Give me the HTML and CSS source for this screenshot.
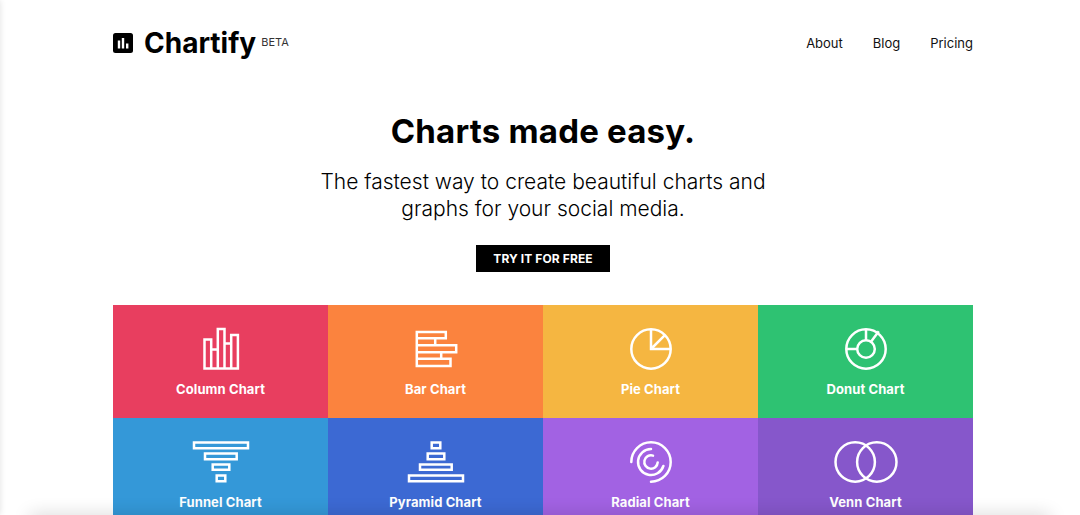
FILE: index.html
```html
<html lang="en">
<head>
    <meta charset="UTF-8">
    <meta name="viewport" content="width=device-width, initial-scale=1.0">
    <title>Chartify</title>
    <link rel="stylesheet" href="styles.css">
</head>
<body>
    <div class="page">
        <div class="header">
            <div class="brand">
                <svg class="logo" width="20" height="20" viewBox="0 0 20 20">
                    <rect width="20" height="20" rx="2.5" fill="#000"/>
                    <rect x="4.8" y="7.5" width="2.4" height="8" fill="#fff"/>
                    <rect x="8.800" y="5" width="2.4" height="10.5" fill="#fff"/>
                    <rect x="13" y="10.5" width="2.4" height="5" fill="#fff"/>
                </svg>
                <div class="brand-name">Chartify</div>
                <div class="beta">BETA</div>
            </div>
            <div class="nav">
                <a href="#">About</a>
                <a href="#">Blog</a>
                <a href="#">Pricing</a>
            </div>
        </div>

        <div class="hero">
            <h1>Charts made easy.</h1>
            <p>The fastest way to create beautiful charts and<br>graphs for your social media.</p>
            <a class="cta" href="#">TRY IT FOR FREE</a>
        </div>

        <div class="chart-grid">
            <div class="chart-card red">
                <svg class="icon" viewBox="0 0 60 60">
                    <path d="M13.500 20.500h6.700v29h-6.700zM20.200 30.500h6.600v19h-6.600zM26.800 10h6.700v39.500h-6.700zM33.500 24.500h6.700v25h-6.700zM40.200 16h6.700v33.500h-6.700z"/>
                </svg>
                <div class="chart-name">Column Chart</div>
            </div>
            <div class="chart-card orange">
                <svg class="icon" viewBox="0 0 60 60">
                    <path d="M10.800 13h29v6.300h-29zM10.800 19.300h18.400v7h-18.400zM10.800 26.300h39.400v7h-39.400zM10.800 33.300h24.400v6.400h-24.400zM10.800 39.700h33.700v7.300h-33.700z"/>
                </svg>
                <div class="chart-name">Bar Chart</div>
            </div>
            <div class="chart-card yellow">
                <svg class="icon" viewBox="0 0 60 60">
                    <circle cx="30" cy="30" r="19.700"/>
                    <path d="M30 10.300V30H49.700M30 30L43.900 16.100"/>
                </svg>
                <div class="chart-name">Pie Chart</div>
            </div>
            <div class="chart-card green">
                <svg class="icon" viewBox="0 0 60 60">
                    <circle cx="30" cy="30" r="19.700"/>
                    <circle cx="30" cy="30" r="8.800"/>
                    <path d="M30 10.300v10.900M35 22.800l7.800-10.500M10.300 30h10.900"/>
                </svg>
                <div class="chart-name">Donut Chart</div>
            </div>
            <div class="chart-card blue">
                <svg class="icon" viewBox="0 0 60 60">
                    <path d="M3 10.500h54v5.700H3zM14 21.500h31.700v5.700H14zM21.700 32.500h16.600v5.300H21.700zM25.700 43.500h8.600v5.700h-8.600z"/>
                </svg>
                <div class="chart-name">Funnel Chart</div>
            </div>
            <div class="chart-card indigo">
                <svg class="icon" viewBox="0 0 60 60">
                    <path d="M25.700 10.500h8.600v5.700h-8.600zM21.700 21.500h16.600v5.700H21.700zM14 32.500h31.700v5.300H14zM3 43.500h54v5.700H3z"/>
                </svg>
                <div class="chart-name">Pyramid Chart</div>
            </div>
            <div class="chart-card purple">
                <svg class="icon round" viewBox="0 0 60 60">
                    <path d="M10.300 30A19.700 19.700 0 1 1 30 49.700"/>
                    <path d="M30 17A13 13 0 1 0 42.400 34"/>
                    <path d="M32 23.600A6.700 6.700 0 1 0 36.700 30.400"/>
                </svg>
                <div class="chart-name">Radial Chart</div>
            </div>
            <div class="chart-card violet">
                <svg class="icon" viewBox="0 0 60 60">
                    <circle cx="19.200" cy="30" r="19.700"/>
                    <circle cx="40.800" cy="30" r="19.700"/>
                </svg>
                <div class="chart-name">Venn Chart</div>
            </div>
        </div>
    </div>
    <div class="edge-left"></div>
    <div class="edge-bottom"></div>
</body>
</html>
```

FILE: styles.css
```css
html, body {
    height: 100%;
    overflow: hidden;
}
body {
    font-family: Inter, "Open Sans", sans-serif;
    background-color: #ffffff;
    color: #000000;
    margin: 0;
}
.page {
    width: 860px;
    margin: 0 auto;
    padding-left: 6px;
}
.header {
    display: flex;
    justify-content: space-between;
    align-items: center;
    padding-top: 24px;
    height: 38px;
}
.brand {
    display: flex;
    align-items: center;
}
.brand-name {
    font-size: 28px;
    font-weight: 700;
    margin-left: 11px;
}
.beta {
    font-size: 11px;
    color: #333333;
    margin-left: 5px;
    margin-bottom: 2px;
}
.nav {
    display: flex;
    gap: 30px;
}
.nav a {
    font-size: 13px;
    color: #111111;
    text-decoration: none;
}
.hero {
    display: flex;
    flex-direction: column;
    align-items: center;
    padding-top: 50px;
}
.hero h1 {
    font-size: 33px;
    line-height: 38px;
    font-weight: 700;
    letter-spacing: 0.2px;
    margin: 0;
}
.hero p {
    font-size: 21px;
    line-height: 27px;
    font-weight: 300;
    text-align: center;
    margin: 18px 0 0;
}
.cta {
    display: block;
    margin-top: 23px;
    padding: 0 17px;
    height: 27px;
    line-height: 27px;
    background-color: #000000;
    color: #ffffff;
    font-size: 12px;
    font-weight: 700;
    letter-spacing: 0.1px;
    text-decoration: none;
}
.chart-grid {
    display: grid;
    grid-template-columns: repeat(4, 215px);
    grid-auto-rows: 113px;
    margin-top: 33px;
}
.chart-card {
    display: flex;
    flex-direction: column;
    align-items: center;
    padding-top: 14px;
    box-sizing: border-box;
}
.chart-card:nth-child(n+5) {
    padding-top: 13.500px;
}
.icon {
    width: 60px;
    height: 60px;
    fill: none;
    stroke: #ffffff;
    stroke-width: 2.5;
    overflow: visible;
}
.icon.round {
    stroke-linecap: round;
}
.chart-name {
    color: #ffffff;
    font-size: 13px;
    font-weight: 700;
    letter-spacing: 0.1px;
    line-height: 16px;
    margin-top: 2px;
}
.red { background-color: #e83e5f; }
.orange { background-color: #fb833e; }
.yellow { background-color: #f5b641; }
.green { background-color: #2ec272; }
.blue { background-color: #3498d8; }
.indigo { background-color: #3c69d3; }
.purple { background-color: #a262e3; }
.violet { background-color: #8657cb; }
.edge-left {
    position: fixed;
    left: -10px;
    top: 0;
    bottom: 0;
    width: 10px;
    box-shadow: 0 0 6px rgba(0, 0, 0, 0.12);
}
.edge-bottom {
    position: fixed;
    left: 30px;
    right: 30px;
    bottom: -12px;
    height: 12px;
    box-shadow: 0 0 18px rgba(0, 0, 0, 0.18);
}
```
